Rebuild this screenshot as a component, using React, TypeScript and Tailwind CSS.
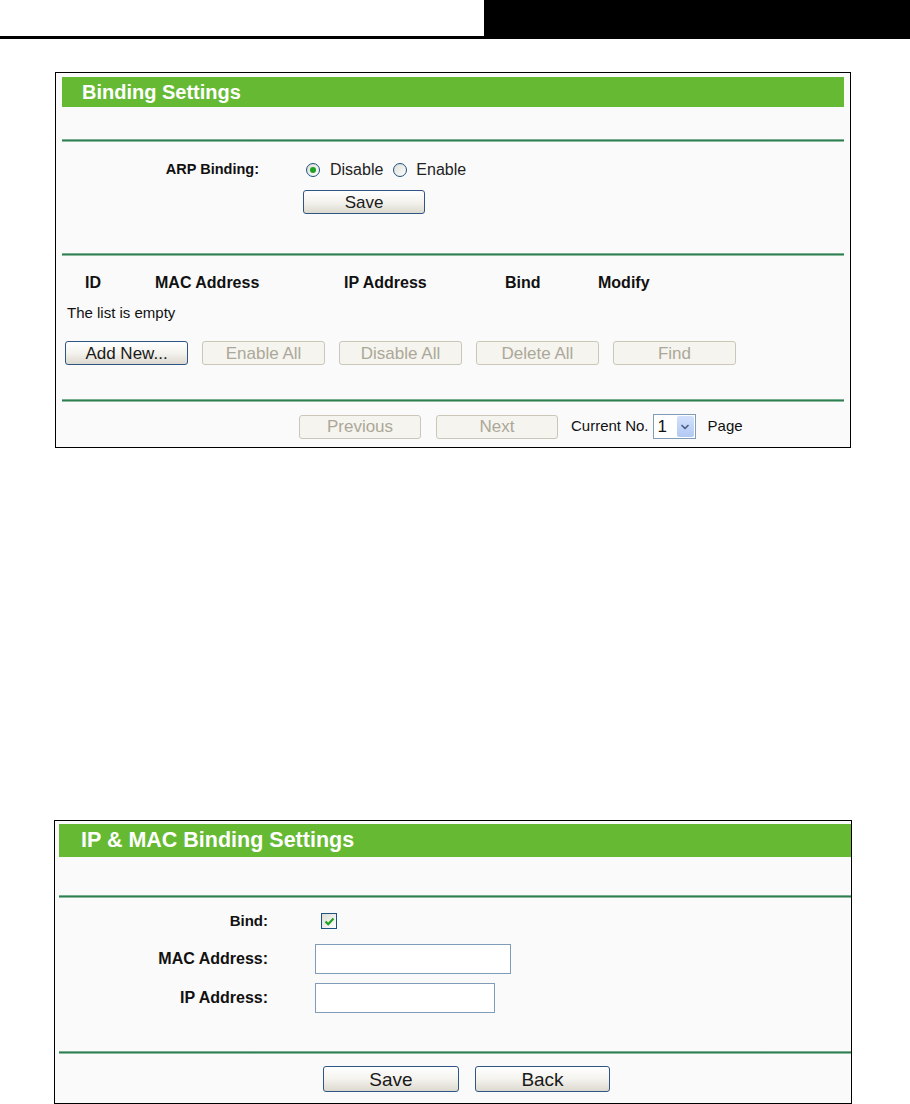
import React from 'react';
import { ChevronDown } from 'lucide-react';

const font = "font-['Liberation_Sans',Arial,sans-serif]";

function Separator() {
  return <div className="h-[3px] bg-gradient-to-b from-[#9ccbb0] via-[#2e7c52] to-[#b9dcc7]" />;
}

function XpButton({ label, disabled, className = '' }: { label: string; disabled?: boolean; className?: string }) {
  return (
    <button
      type="button"
      className={
        'flex items-center justify-center rounded-[3px] border leading-none ' +
        (disabled
          ? 'border-[#cbc7b8] bg-[#f5f4ee] text-[#aca899] '
          : 'border-[#2f5584] bg-gradient-to-b from-white via-[#f4f3ee] to-[#dcd9cf] text-[#1a1a1a] ') +
        className
      }
    >
      {label}
    </button>
  );
}

function Radio({ checked }: { checked?: boolean }) {
  return (
    <span className="flex h-[14px] w-[14px] items-center justify-center rounded-full border border-[#1c5180] bg-gradient-to-br from-[#dcdcd7] to-white">
      {checked && <span className="h-[6px] w-[6px] rounded-full bg-[#21a121]" />}
    </span>
  );
}

function Checkbox() {
  return (
    <span className="flex h-[16px] w-[16px] items-center justify-center border border-[#1c5180] bg-gradient-to-br from-[#dcdcd7] to-white">
      <svg width="11" height="11" viewBox="0 0 11 11">
        <path d="M1.5 5.5 L4.2 8.2 L9.5 2.5" fill="none" stroke="#21a121" strokeWidth="2.2" />
      </svg>
    </span>
  );
}

function BindingSettings() {
  const actions = [
    { label: 'Add New...', disabled: false },
    { label: 'Enable All', disabled: true },
    { label: 'Disable All', disabled: true },
    { label: 'Delete All', disabled: true },
    { label: 'Find', disabled: true },
  ];

  return (
    <div className="ml-[55px] mt-[33px] h-[376px] w-[796px] border border-black bg-[#fafafa] px-[6px] pt-[4px]">
      <div className="flex h-[30px] items-center bg-[#66b933] pl-[20px] text-[20px] font-bold text-white">
        Binding Settings
      </div>
      <div className="mt-[32px]">
        <Separator />
      </div>

      <div className="mt-[18px] flex h-[20px] items-center">
        <div className="w-[197px] text-right text-[14.5px] font-bold text-[#111]">ARP Binding:</div>
        <div className="ml-[47px] flex items-center text-[16px] text-[#222]">
          <Radio checked />
          <span className="ml-[10px]">Disable</span>
          <span className="ml-[10px]">
            <Radio />
          </span>
          <span className="ml-[9px]">Enable</span>
        </div>
      </div>
      <div className="mt-[10px] pl-[241px]">
        <XpButton label="Save" className="h-[24px] w-[122px] text-[17px]" />
      </div>

      <div className="mt-[39px]">
        <Separator />
      </div>

      <div className="mt-[17px] flex h-[20px] items-center pl-[23px] text-[16px] font-bold text-[#111]">
        <span className="w-[70px]">ID</span>
        <span className="w-[189px]">MAC Address</span>
        <span className="w-[161px]">IP Address</span>
        <span className="w-[93px]">Bind</span>
        <span>Modify</span>
      </div>
      <div className="mt-[10px] flex h-[20px] items-center pl-[5px] text-[15px] text-[#111]">The list is empty</div>

      <div className="mt-[18px] flex gap-[14px] pl-[3px]">
        {actions.map((a) => (
          <XpButton key={a.label} label={a.label} disabled={a.disabled} className="h-[24px] w-[123px] text-[17px]" />
        ))}
      </div>

      <div className="mt-[34px]">
        <Separator />
      </div>

      <div className="mt-[12px] flex items-center pl-[237px] text-[15px] text-[#111]">
        <XpButton label="Previous" disabled className="h-[24px] w-[122px] text-[17px]" />
        <XpButton label="Next" disabled className="ml-[15px] h-[24px] w-[122px] text-[17px]" />
        <span className="ml-[13px]">Current No.</span>
        <div className="ml-[4px] flex h-[25px] w-[43px] items-center border border-[#7f9db9] bg-white pl-[4px] pr-[1px]">
          <span className="flex-1 text-[17px] leading-none">1</span>
          <span className="flex h-[21px] w-[17px] items-center justify-center rounded-[2px] bg-gradient-to-b from-[#d3e1fc] to-[#b2c8f4]">
            <ChevronDown size={12} strokeWidth={3.5} color="#4d6185" />
          </span>
        </div>
        <span className="ml-[12px]">Page</span>
      </div>
    </div>
  );
}

function IpMacBinding() {
  return (
    <div className="ml-[54px] mt-[372px] h-[284px] w-[798px] overflow-hidden border border-black bg-[#fafafa] pl-[4px] pt-[3px]">
      <div className="flex h-[33px] items-center bg-[#66b933] pl-[22px] text-[21.5px] font-bold text-white">
        IP &amp; MAC Binding Settings
      </div>
      <div className="mt-[38px]">
        <Separator />
      </div>

      <div className="mt-[14px] flex h-[18px] items-center">
        <div className="w-[209px] text-right text-[15px] font-bold text-[#111]">Bind:</div>
        <div className="ml-[53px]">
          <Checkbox />
        </div>
      </div>
      <div className="mt-[14px] flex h-[30px] items-center">
        <div className="w-[209px] text-right text-[16px] font-bold text-[#111]">MAC Address:</div>
        <div className="ml-[47px] h-[30px] w-[196px] border border-[#7f9db9] bg-white" />
      </div>
      <div className="mt-[9px] flex h-[30px] items-center">
        <div className="w-[209px] text-right text-[16px] font-bold text-[#111]">IP Address:</div>
        <div className="ml-[47px] h-[30px] w-[180px] border border-[#7f9db9] bg-white" />
      </div>

      <div className="mt-[38px]">
        <Separator />
      </div>

      <div className="mt-[12px] flex gap-[16px] pl-[264px]">
        <XpButton label="Save" className="h-[26px] w-[136px] text-[19px]" />
        <XpButton label="Back" className="h-[26px] w-[135px] text-[19px]" />
      </div>
    </div>
  );
}

export default function App() {
  return (
    <div className={`min-h-screen w-[910px] bg-white ${font}`}>
      <div className="flex">
        <div className="h-[39px] w-[484px] border-b-[3px] border-black" />
        <div className="h-[39px] flex-1 bg-black" />
      </div>
      <BindingSettings />
      <IpMacBinding />
    </div>
  );
}
